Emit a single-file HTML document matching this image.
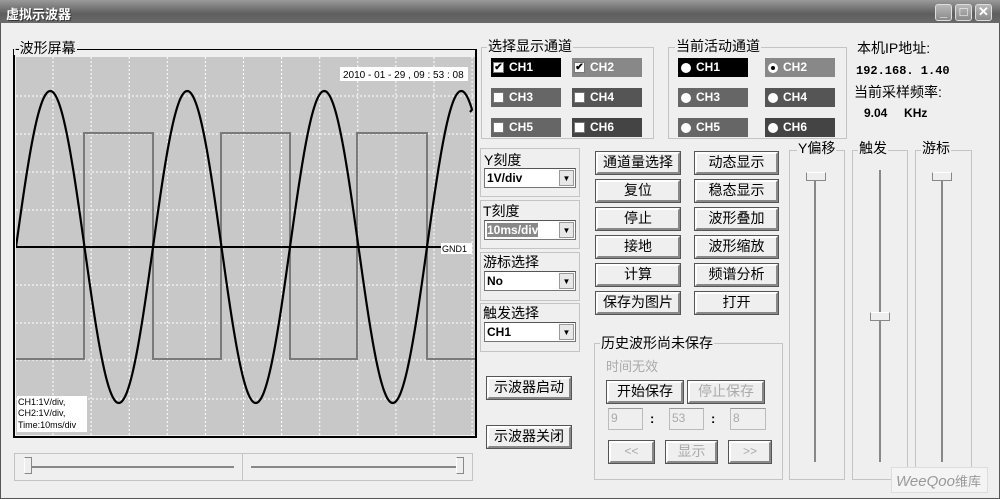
<!DOCTYPE html>
<html><head><meta charset="utf-8"><style>
*{margin:0;padding:0;box-sizing:border-box}
body{width:1000px;height:499px;background:#efefef;position:relative;overflow:hidden;font-family:"Liberation Sans","Noto Sans CJK SC",sans-serif;font-size:13px;color:#000}
.a{position:absolute}
.tb{left:0;top:0;width:1000px;height:23px;background:linear-gradient(#9a9a9a,#5e5e5e 60%,#6a6a6a);color:#fff;font-weight:bold;font-size:13px;padding:4px 6px;text-shadow:1px 1px 0 #333}
.wb{top:4px;width:17px;height:17px;border:1px solid #ddd;border-radius:3px;background:linear-gradient(#b8b8b8,#8a8a8a);color:#fff;font-size:13px;line-height:14px;text-align:center;font-weight:bold}
.grp{border:1px solid #c4c4c4;}
.lg{background:#efefef;padding:0 1px;font-size:13px;line-height:14px}
.chip{height:19px;width:70px;color:#fff;font-size:12px;font-weight:bold;line-height:19px;padding-left:18px}
.cb{position:absolute;left:2px;top:4px;width:11px;height:11px;background:#fff;border:1px solid #777;font-size:10px;line-height:9px;color:#000;text-align:center}
.rd{position:absolute;left:3px;top:5px;width:10px;height:10px;border-radius:50%;background:#fff}
.btn{height:22px;border:2px solid #888;border-top-color:#fff;border-left-color:#fff;outline:1px solid #555;background:#efefef;text-align:center;line-height:17px;font-size:14px}
.combo{width:92px;height:20px;background:#fff;border:1px solid #777;border-top-color:#555;font-size:12px;font-weight:bold;line-height:18px;padding-left:2px}
.combo i{position:absolute;right:1px;top:1px;width:15px;height:16px;background:#e8e8e8;border:1px solid #999;font-style:normal;font-size:8px;text-align:center;line-height:15px}
.dis{color:#aaa}
.tf{width:35px;height:22px;border:1px solid #bbb;border-top-color:#999;color:#aaa;font-size:12px;padding:2px}
</style></head><body>
<div class="a tb">虚拟示波器</div>
<div class="a wb" style="left:935px">_</div>
<div class="a wb" style="left:955px">□</div>
<div class="a wb" style="left:975px">✕</div>
<div class="a" style="left:0;top:23px;width:1000px;height:476px;border:1px solid #555;border-top:none"></div>

<!-- screen -->
<div class="a" style="left:13px;top:49px;width:464px;height:389px;border:2px solid #000;border-top:1px solid #000"></div>
<div class="a lg" style="left:14px;top:41px;font-size:14px">-波形屏幕</div>
<svg class="a" style="left:16px;top:57px" width="459" height="378" viewBox="16 57 459 378">
<rect x="16" y="57" width="459" height="378" fill="#c8c8c8"/>
<g stroke="#fff" stroke-width="1" stroke-dasharray="2,2" id="grid"></g>
<path id="sq" fill="none" stroke="#7a7a7a" stroke-width="2"/>
<line x1="16" y1="247" x2="442" y2="247" stroke="#000" stroke-width="2"/>
<path id="sn" fill="none" stroke="#000" stroke-width="2.2"/>
<rect x="340" y="67" width="128" height="14" fill="#fff"/>
<text x="343" y="78" font-size="10" font-family="Liberation Sans">2010 - 01 - 29 , 09 : 53 : 08</text>
<rect x="441" y="243" width="31" height="11" fill="#fff"/>
<text x="442" y="252" font-size="9" font-family="Liberation Sans">GND1</text>
<rect x="17" y="396" width="70" height="36" fill="#fff"/>
<text font-size="9" font-family="Liberation Sans"><tspan x="18" y="405">CH1:1V/div,</tspan><tspan x="18" y="416">CH2:1V/div,</tspan><tspan x="18" y="428">Time:10ms/div</tspan></text>
</svg>
<script>
var g=document.getElementById('grid'),s='';
for(var x=53;x<475;x+=38.1){s+='<line x1="'+x+'" y1="57" x2="'+x+'" y2="435"/>';}
[96,134,172,210,285,323,360,399].forEach(function(y){s+='<line x1="16" y1="'+y+'" x2="475" y2="'+y+'"/>';});
g.innerHTML=s;
var p='';for(var x=16;x<=472;x+=1){var y=247-156*Math.sin((x-16)/137*2*Math.PI);p+=(x==16?'M':'L')+x+' '+y.toFixed(1);}
p+='L470 112';document.getElementById('sn').setAttribute('d',p);
document.getElementById('sq').setAttribute('d','M16 359H84V133H153V359H221V133H290V359H357V133H427V359H475');
</script>
<!-- bottom slider -->
<div class="a grp" style="left:14px;top:453px;width:459px;height:28px"></div>
<div class="a" style="left:242px;top:453px;width:1px;height:28px;background:#c4c4c4"></div>
<div class="a" style="left:30px;top:466px;width:204px;height:2px;background:#888"></div>
<div class="a" style="left:251px;top:466px;width:210px;height:2px;background:#888"></div>
<div class="a" style="left:24px;top:457px;width:8px;height:17px;border:1px solid #888;border-left-color:#fff;background:#eee"></div>
<div class="a" style="left:456px;top:457px;width:8px;height:17px;border:1px solid #888;border-left-color:#fff;background:#eee"></div>

<!-- channel select -->
<div class="a grp" style="left:481px;top:47px;width:173px;height:92px"></div>
<div class="a lg" style="left:487px;top:39px;font-size:14px">选择显示通道</div>
<div class="a chip" style="left:491px;top:58px;background:#000"><span class="cb">✔</span>CH1</div>
<div class="a chip" style="left:572px;top:58px;background:#888"><span class="cb">✔</span>CH2</div>
<div class="a chip" style="left:491px;top:88px;background:#666"><span class="cb"></span>CH3</div>
<div class="a chip" style="left:572px;top:88px;background:#555"><span class="cb"></span>CH4</div>
<div class="a chip" style="left:491px;top:118px;background:#666"><span class="cb"></span>CH5</div>
<div class="a chip" style="left:572px;top:118px;background:#444"><span class="cb"></span>CH6</div>

<div class="a grp" style="left:668px;top:47px;width:179px;height:92px"></div>
<div class="a lg" style="left:675px;top:39px;font-size:14px">当前活动通道</div>
<div class="a chip" style="left:678px;top:58px;background:#000"><span class="rd"></span>CH1</div>
<div class="a chip" style="left:765px;top:58px;background:#888"><span class="rd" style="border:3px solid #fff;background:#000"></span>CH2</div>
<div class="a chip" style="left:678px;top:88px;background:#666"><span class="rd"></span>CH3</div>
<div class="a chip" style="left:765px;top:88px;background:#555"><span class="rd"></span>CH4</div>
<div class="a chip" style="left:678px;top:118px;background:#666"><span class="rd"></span>CH5</div>
<div class="a chip" style="left:765px;top:118px;background:#444"><span class="rd"></span>CH6</div>

<div class="a" style="left:857px;top:38px;font-size:14px">本机IP地址:</div>
<div class="a" style="left:856px;top:64px;font-size:12px;font-weight:bold;font-family:'Liberation Mono',monospace">192.168. 1.40</div>
<div class="a" style="left:854px;top:82px;font-size:14px">当前采样频率:</div>
<div class="a" style="left:864px;top:106px;font-size:12px;font-weight:bold">9.04 &nbsp;&nbsp;&nbsp;&nbsp;KHz</div>

<!-- left combos -->
<div class="a grp" style="left:480px;top:148px;width:100px;height:49px"></div>
<div class="a" style="left:484px;top:150px;font-size:14px">Y刻度</div>
<div class="a combo" style="left:484px;top:168px">1V/div<i>▼</i></div>
<div class="a grp" style="left:480px;top:200px;width:100px;height:49px"></div>
<div class="a" style="left:483px;top:201px;font-size:14px">T刻度</div>
<div class="a combo" style="left:484px;top:220px"><span style="background:#888;color:#fff">10ms/div</span><i>▼</i></div>
<div class="a grp" style="left:480px;top:252px;width:100px;height:49px"></div>
<div class="a" style="left:483px;top:252px;font-size:14px">游标选择</div>
<div class="a combo" style="left:484px;top:271px">No<i>▼</i></div>
<div class="a grp" style="left:480px;top:303px;width:100px;height:49px"></div>
<div class="a" style="left:483px;top:303px;font-size:14px">触发选择</div>
<div class="a combo" style="left:484px;top:322px">CH1<i>▼</i></div>

<div class="a btn" style="left:487px;top:377px;width:84px">示波器启动</div>
<div class="a btn" style="left:487px;top:426px;width:84px">示波器关闭</div>

<!-- buttons -->
<div class="a btn" style="left:596px;top:152px;width:84px">通道量选择</div>
<div class="a btn" style="left:695px;top:152px;width:83px">动态显示</div>
<div class="a btn" style="left:596px;top:180px;width:84px">复位</div>
<div class="a btn" style="left:695px;top:180px;width:83px">稳态显示</div>
<div class="a btn" style="left:596px;top:208px;width:84px">停止</div>
<div class="a btn" style="left:695px;top:208px;width:83px">波形叠加</div>
<div class="a btn" style="left:596px;top:236px;width:84px">接地</div>
<div class="a btn" style="left:695px;top:236px;width:83px">波形缩放</div>
<div class="a btn" style="left:596px;top:264px;width:84px">计算</div>
<div class="a btn" style="left:695px;top:264px;width:83px">频谱分析</div>
<div class="a btn" style="left:596px;top:292px;width:84px">保存为图片</div>
<div class="a btn" style="left:695px;top:292px;width:83px">打开</div>

<!-- history -->
<div class="a grp" style="left:594px;top:343px;width:189px;height:137px"></div>
<div class="a lg" style="left:600px;top:336px;font-size:14px">历史波形尚未保存</div>
<div class="a dis" style="left:606px;top:356px;font-size:13px">时间无效</div>
<div class="a btn" style="left:607px;top:381px;width:76px">开始保存</div>
<div class="a btn dis" style="left:688px;top:381px;width:76px">停止保存</div>
<div class="a tf" style="left:608px;top:408px">9</div>
<div class="a" style="left:650px;top:411px;font-weight:bold">:</div>
<div class="a tf" style="left:669px;top:408px">53</div>
<div class="a" style="left:711px;top:411px;font-weight:bold">:</div>
<div class="a tf" style="left:730px;top:408px;width:36px">8</div>
<div class="a btn dis" style="left:609px;top:441px;width:45px;font-size:12px">&lt;&lt;</div>
<div class="a btn dis" style="left:666px;top:441px;width:51px">显示</div>
<div class="a btn dis" style="left:729px;top:441px;width:42px;font-size:12px">&gt;&gt;</div>

<!-- vertical sliders -->
<div class="a grp" style="left:789px;top:150px;width:56px;height:330px"></div>
<div class="a lg" style="left:797px;top:141px;font-size:14px">Y偏移</div>
<div class="a" style="left:814px;top:175px;width:2px;height:287px;background:#888"></div>
<div class="a" style="left:806px;top:172px;width:20px;height:9px;border:1px solid #888;border-top-color:#fff;background:#eee"></div>
<div class="a grp" style="left:852px;top:150px;width:56px;height:330px"></div>
<div class="a lg" style="left:858px;top:141px;font-size:14px">触发</div>
<div class="a" style="left:879px;top:170px;width:2px;height:292px;background:#888"></div>
<div class="a" style="left:870px;top:312px;width:20px;height:9px;border:1px solid #888;border-top-color:#fff;background:#eee"></div>
<div class="a grp" style="left:915px;top:150px;width:57px;height:330px"></div>
<div class="a lg" style="left:921px;top:141px;font-size:14px">游标</div>
<div class="a" style="left:941px;top:175px;width:2px;height:287px;background:#888"></div>
<div class="a" style="left:932px;top:172px;width:20px;height:9px;border:1px solid #888;border-top-color:#fff;background:#eee"></div>

<div class="a" style="left:891px;top:467px;width:97px;height:26px;background:#f4f4f4;border:1px solid #ddd;color:#999;font-style:italic;font-size:15px;padding:3px 4px">WeeQoo<span style="font-style:normal;font-size:13px">维库</span></div>
</body></html>
